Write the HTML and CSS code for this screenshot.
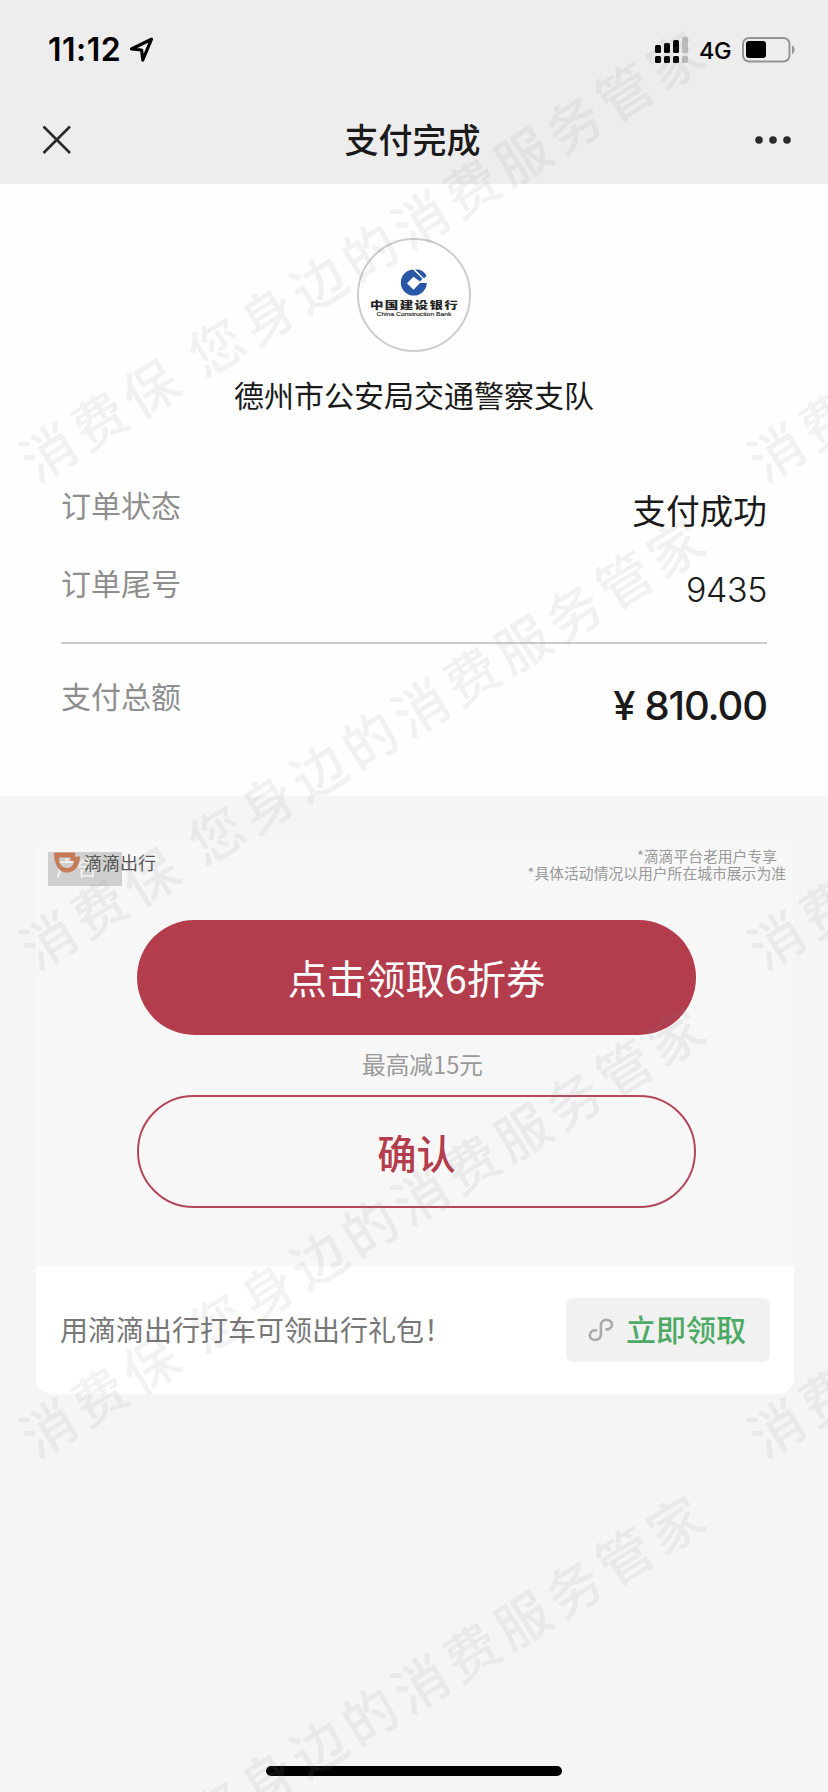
FILE: index.html
```html
<!DOCTYPE html>
<html lang="zh-CN">
<head>
<meta charset="utf-8">
<title>支付完成</title>
<link rel="stylesheet" href="styles.css">
</head>
<body>
<div class="screen">
  <header class="top">
    <div class="status">
      <span class="clock">11:12</span>
      <svg class="locate" width="28" height="28" viewBox="0 0 28 28"><path d="M3.500 13 23.500 3.200 14.800 24 13.600 14Z" fill="none" stroke="#000" stroke-width="3.200" stroke-linejoin="round"/></svg>
      <span class="spacer"></span>
      <svg class="signal" width="34" height="28" viewBox="0 0 34 28">
        <g fill="#000"><rect x="0" y="9" width="6" height="8" rx="1.5"/><rect x="9" y="7" width="6" height="10" rx="1.5"/><rect x="18" y="4" width="6" height="13" rx="1.5"/><rect x="0" y="20" width="6" height="7" rx="1.5"/><rect x="9" y="20" width="6" height="7" rx="1.5"/><rect x="18" y="20" width="6" height="7" rx="1.5"/></g>
        <g fill="#bdbdbd"><rect x="27" y="1" width="6" height="16" rx="1.5"/><rect x="27" y="20" width="6" height="7" rx="1.5"/></g>
      </svg>
      <span class="network">4G</span>
      <svg class="battery" width="54" height="26" viewBox="0 0 54 26"><rect x="1" y="1" width="46.500" height="23.500" rx="6" fill="none" stroke="#949494" stroke-width="2"/><rect x="4" y="4" width="20" height="17" rx="3" fill="#000"/><path d="M50 8.500c3.500 1.500 3.500 7 0 8.500z" fill="#949494"/></svg>
    </div>
    <nav class="nav">
      <svg width="30" height="30" viewBox="0 0 30 30"><path d="M1.500 1.500 28 28M28 1.500 1.500 28" stroke="#2a2a2a" stroke-width="2.600" fill="none"/></svg>
      <h1 class="title">支付完成</h1>
      <svg width="36" height="8" viewBox="0 0 36 8" fill="#2a2a2a"><circle cx="4" cy="4" r="3.800"/><circle cx="18" cy="4" r="3.800"/><circle cx="32" cy="4" r="3.800"/></svg>
    </nav>
  </header>

  <section class="receipt">
    <div class="avatar">
      <svg width="110" height="110" viewBox="0 0 110 110">
        <path d="M67.800 43A13 13 0 1 1 54 29.600L63.500 38.800 61 41.500 54.500 36.800 48 43.300 54.500 49.800 61 43Z" fill="#2858a5"/>
        <path d="M56.200 29.500C61.500 29 65.500 31.500 67.500 36L65 38.500Z" fill="#2858a5"/>
        <g transform="translate(11 69) scale(1.350 1)"><text class="bank-cn" textLength="65">中国建设银行</text></g>
        <text class="bank-en" x="17.500" y="76" textLength="75" lengthAdjust="spacingAndGlyphs">China Construction Bank</text>
      </svg>
    </div>
    <div class="merchant">德州市公安局交通警察支队</div>
    <dl class="rows">
      <div class="row"><dt>订单状态</dt><dd>支付成功</dd></div>
      <div class="row row-last"><dt>订单尾号</dt><dd class="number">9435</dd></div>
      <div class="row row-total"><dt>支付总额</dt><dd class="total"><span class="yen">¥</span>810.00</dd></div>
    </dl>
  </section>

  <section class="card">
    <div class="offer">
      <div class="offer-head">
        <div class="brand">
          <span class="ad-tag">广告</span>
          <svg class="didi" width="28" height="21" viewBox="0 0 28 21"><path d="M0 .5H21V4.500H26C25.500 14 21 20.500 13 20.500C5 20.500 0 13 0 .5ZM5 5.500C5 12 8.500 16 13 16C17.500 16 19.500 12.500 20 9H16.500V5.500Z" fill="#c47851" fill-rule="evenodd"/></svg>
          <span class="brand-name">滴滴出行</span>
        </div>
        <div class="notes"><div class="note-first">*滴滴平台老用户专享</div><div>*具体活动情况以用户所在城市展示为准</div></div>
      </div>
      <div class="pill pill-solid">点击领取6折券</div>
      <div class="limit">最高减15元</div>
      <div class="pill pill-line">确认</div>
    </div>
    <div class="promo">
      <span class="promo-text">用滴滴出行打车可领出行礼包！</span>
      <div class="claim">
        <svg width="26" height="24" viewBox="0 0 26 24"><path d="M9.200 12.600C5 11.500 1.800 14 1.800 17.200C1.800 20.500 4.400 22 7 22C10.600 22 12.900 19.800 12.900 16.800V7.200C12.900 4 15.400 1.900 18.500 1.900C21.700 1.900 24 4 24 6.800C24 9.800 21 12 17.400 11.200" fill="none" stroke="#aaa" stroke-width="2.600"/></svg>
        <span>立即领取</span>
      </div>
    </div>
  </section>
  <div class="home-bar"></div>

  <svg class="watermark" width="828" height="1792" viewBox="0 0 828 1792" aria-hidden="true">
    <defs><text id="mark" transform="rotate(-32)" x="-27" y="21">消费保 您身边的消费服务管家</text></defs>
    <use href="#mark" x="48" y="452"/><use href="#mark" x="48" y="940"/><use href="#mark" x="48" y="1428"/><use href="#mark" x="48" y="1916"/>
    <use href="#mark" x="776" y="452"/><use href="#mark" x="776" y="940"/><use href="#mark" x="776" y="1428"/>
  </svg>
</div>
</body>
</html>
```
FILE: styles.css
```css
* { box-sizing: border-box; }
body {
  margin: 0;
  background: #f5f5f5;
  font-family: Inter, "Noto Sans CJK SC", sans-serif;
  color: #1a1a1a;
}
svg { display: block; flex: none; }
.screen {
  position: relative;
  width: 828px;
  height: 1792px;
  overflow: hidden;
  display: flex;
  flex-direction: column;
  background: #f5f5f5;
}
.top { height: 184px; background: #ededed; }
.status {
  display: flex;
  align-items: center;
  height: 100px;
  padding: 0 32px 0 48px;
  color: #000;
}
.clock { width: 80px; font-size: 32px; font-weight: 600; line-height: 40px; letter-spacing: 0.5px; }
.spacer { flex: 1; }
.network { margin: 2px 10px 0 10px; width: 33px; font-size: 23.5px; font-weight: 500; line-height: 30px; letter-spacing: -0.3px; }
.nav {
  display: flex;
  align-items: center;
  justify-content: space-between;
  height: 80px;
  padding: 0 37px 0 42px;
}
.title { margin: 0; font-size: 34px; font-weight: 500; line-height: 48px; padding: 1px 2px 0 0; }
.receipt {
  height: 612px;
  padding: 54px 61px 0;
  background: #fefefe;
}
.avatar {
  width: 114px;
  height: 114px;
  margin: 0 auto;
  border: 2px solid #ccc;
  border-radius: 50%;
  background: #fff;
}
.bank-cn { font: 900 10px "Noto Sans CJK SC", sans-serif; fill: #222; }
.bank-en { font: 6.2px "Liberation Sans", sans-serif; fill: #222; stroke: #222; stroke-width: .15px; }
.merchant { margin-top: 22px; text-align: center; font-size: 30px; line-height: 44px; }
.rows { margin: 0; padding-top: 66px; }
.row { display: flex; justify-content: space-between; height: 78px; }
.row dt { font-size: 30px; line-height: 44px; color: #8e8e8e; }
.row dd { margin: 0; font-size: 33.7px; line-height: 55px; }
.row .number { font-size: 34px; font-weight: 300; letter-spacing: -0.4px; }
.row-last { height: 80px; }
.row-total { border-top: 2px solid #ccc; height: 100px; padding-top: 31px; }
.row .total { font-size: 40px; font-weight: 500; letter-spacing: -1.1px; line-height: 62px; }
.yen { margin-right: 10px; }
.card {
  width: 758px;
  height: 554px;
  margin: 44px 0 0 36px;
  border-radius: 16px;
  overflow: hidden;
  background: #fff;
}
.offer { height: 426px; padding: 8px 8px 0 12px; background: #f7f7f7; font-family: "Noto Sans CJK SC", sans-serif; }
.offer-head { display: flex; justify-content: space-between; height: 72px; }
.brand { position: relative; width: 110px; padding-top: 4px; }
.ad-tag {
  display: block;
  width: 74px;
  height: 34px;
  padding-left: 8px;
  background: #cfcfcf;
  color: #f4f4f4;
  font-size: 20px;
  line-height: 31px;
  letter-spacing: 1px;
}
.didi { position: absolute; left: 6px; top: 4px; opacity: .94; }
.brand-name { position: absolute; left: 36px; top: 1px; font-size: 18px; line-height: 26px; color: #555; white-space: nowrap; }
.notes { font-size: 14.8px; line-height: 16.5px; color: #999; text-align: right; white-space: nowrap; }
.note-first { padding-right: 9px; }
.pill {
  width: 559px;
  height: 115px;
  margin-left: 89px;
  border-radius: 58px;
  text-align: center;
  font-size: 39.3px;
  line-height: 114px;
}
.pill-solid { background: #b33c4d; color: #fff; }
.limit { height: 60px; margin-left: 89px; width: 571px; text-align: center; font-size: 23.7px; line-height: 58px; color: #999; }
.pill-line { height: 113px; border: 2.5px solid #b24859; color: #b33c4d; font-weight: 500; line-height: 110px; }
.promo { display: flex; align-items: center; justify-content: space-between; height: 128px; padding: 0 24px; }
.promo-text { font-size: 28px; line-height: 42px; color: #777; white-space: nowrap; padding-top: 2px; }
.claim {
  display: flex;
  align-items: center;
  gap: 12px;
  width: 204px;
  height: 64px;
  padding-left: 22px;
  border-radius: 7px;
  background: #f1f1f1;
  color: #4daa65;
  font-size: 30px;
  font-weight: 500;
  line-height: 44px;
  white-space: nowrap;
}
.home-bar { width: 296px; height: 10px; margin: auto auto 16px; border-radius: 5px; background: #000; }
.watermark {
  position: absolute;
  inset: 0;
  pointer-events: none;
  font: 500 54px "Noto Sans CJK SC", sans-serif;
  letter-spacing: 6.1px;
  fill: rgba(140, 140, 140, .11);
}
```
